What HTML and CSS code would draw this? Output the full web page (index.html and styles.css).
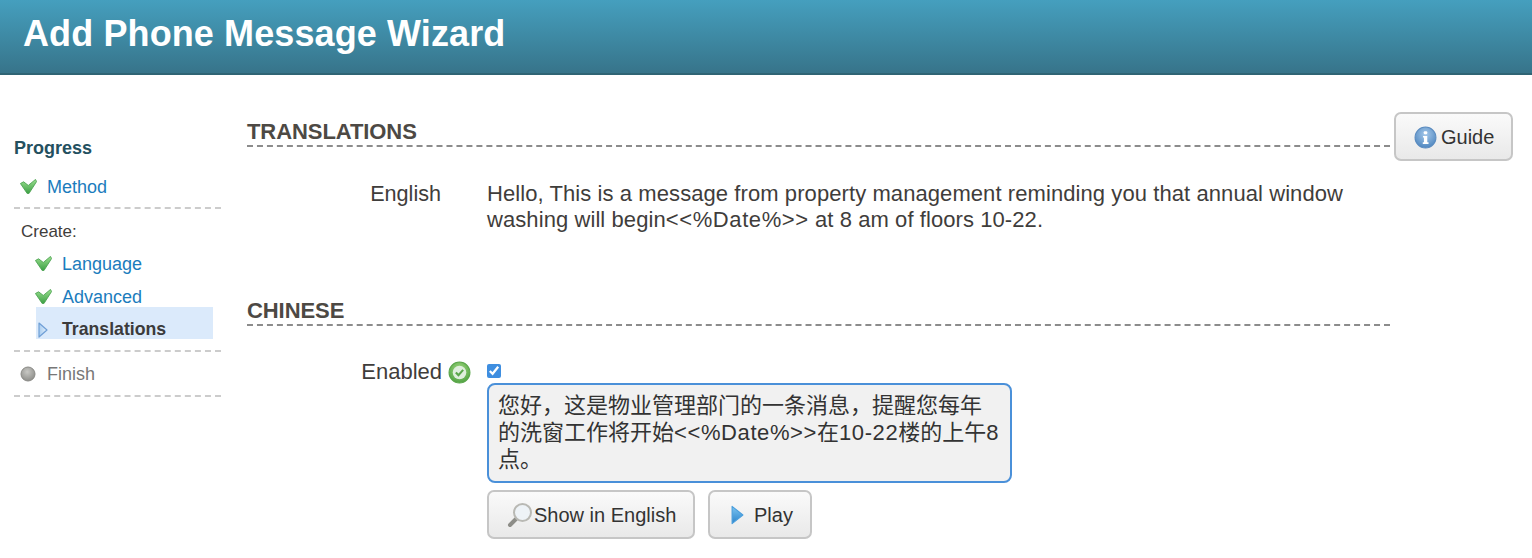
FILE: index.html
```html
<!DOCTYPE html>
<html lang="en">
<head>
<meta charset="utf-8">
<title>Add Phone Message Wizard</title>
<link rel="stylesheet" href="styles.css">
</head>
<body>
<svg class="defs" width="0" height="0" aria-hidden="true">
  <defs>
    <linearGradient id="gGreen" x1="0" y1="0" x2="0" y2="1"><stop offset="0" stop-color="#9be08f"/><stop offset="1" stop-color="#3c9f45"/></linearGradient>
    <linearGradient id="gBlue" x1="0" y1="0" x2="0" y2="1"><stop offset="0" stop-color="#7cc4f0"/><stop offset="1" stop-color="#2b84cc"/></linearGradient>
    <linearGradient id="gPale" x1="0" y1="0" x2="1" y2="0"><stop offset="0" stop-color="#a9cdf0"/><stop offset="1" stop-color="#e2effb"/></linearGradient>
    <radialGradient id="gGrey" cx=".45" cy=".35" r=".7"><stop offset="0" stop-color="#c8c8c4"/><stop offset="1" stop-color="#8a8a86"/></radialGradient>
    <radialGradient id="gInfo" cx=".5" cy=".35" r=".7"><stop offset="0" stop-color="#a5c8ea"/><stop offset="1" stop-color="#4a83bd"/></radialGradient>
    <radialGradient id="gOk" cx=".5" cy=".35" r=".7"><stop offset="0" stop-color="#9fd87f"/><stop offset="1" stop-color="#4c9f3f"/></radialGradient>
    <symbol id="check" viewBox="0 0 16 14" preserveAspectRatio="none"><path d="M.4 4.2 L3.4 2.6 L7.8 6 L14.6 .4 L15.6 2.4 L8.4 13.6 L6.8 13.6 Z" fill="url(#gGreen)" stroke="#46a04c" stroke-width=".8" stroke-linejoin="round"/></symbol>
  </defs>
</svg>

<header class="banner"><h1 class="banner-title">Add Phone Message Wizard</h1></header>

<div class="page">
  <nav class="progress">
    <h2 class="progress-title">Progress</h2>
    <div class="step step-top">
      <svg class="ico-check"><use href="#check"/></svg><a class="link">Method</a>
    </div>
    <div class="group">
      <div class="group-label">Create:</div>
      <div class="sub sub-first"><svg class="ico-check"><use href="#check"/></svg><a class="link">Language</a></div>
      <div class="sub sub-second"><svg class="ico-check"><use href="#check"/></svg><a class="link">Advanced</a></div>
      <div class="sub sub-current">
        <svg class="ico-tri" viewBox="0 0 10 16"><path d="M1 1 L9 8 L1 15 Z" fill="url(#gPale)" stroke="#6f9fd6" stroke-width="1.2" stroke-linejoin="round"/></svg>
        <strong class="current-text">Translations</strong>
      </div>
    </div>
    <div class="step step-finish">
      <svg class="ico-dot" viewBox="0 0 16 16"><circle cx="8" cy="8" r="7" fill="url(#gGrey)" stroke="#8a8a86"/></svg><span class="muted">Finish</span>
    </div>
  </nav>

  <main class="content">
    <div class="head-row">
      <h2 class="section-title">TRANSLATIONS</h2>
      <button class="btn btn-guide" type="button">
        <svg class="ico-info" viewBox="0 0 22 22"><circle cx="11" cy="11" r="10" fill="url(#gInfo)" stroke="#5b8cc0"/><rect x="9.3" y="5" width="3.4" height="3" rx="1" fill="#fff"/><path d="M8.6 9.5h4.1v6h1.2v1.6H8.4v-1.6h1.1v-4.4h-.9z" fill="#fff"/></svg>Guide
      </button>
    </div>
    <div class="field field-english">
      <div class="field-label">English</div>
      <div class="field-text">
        <div class="line">Hello, This is a message from property management reminding you that annual window</div>
        <div class="line">washing will begin<span class="token">&lt;&lt;%Date%&gt;&gt;</span> at 8 am of floors 10-22.</div>
      </div>
    </div>

    <h2 class="section-title section-chinese">CHINESE</h2>
    <div class="field field-chinese">
      <div class="field-label label-enabled">Enabled
        <svg class="ico-ok" viewBox="0 0 22 22"><circle cx="11" cy="11" r="10" fill="url(#gOk)" stroke="#5aa64a"/><circle cx="11" cy="11" r="6.5" fill="#dfeedd"/><path d="M7.5 11 L10 13.5 L14.5 8.5" fill="none" stroke="#5aa64a" stroke-width="2"/></svg>
      </div>
      <div class="field-body">
        <input class="enable-box" type="checkbox" checked>
        <div class="message" lang="zh-CN">
          <div class="line">您好，这是物业管理部门的一条消息，提醒您每年</div>
          <div class="line">的洗窗工作将开始<span class="latin">&lt;&lt;%Date%&gt;&gt;</span>在<span class="latin">10-22</span>楼的上午<span class="latin">8</span></div>
          <div class="line">点。</div>
        </div>
        <div class="actions">
          <button class="btn btn-show" type="button">
            <svg class="ico-search" viewBox="0 0 26 26"><path d="M9 17 L3 23" stroke="#8d8d88" stroke-width="4" stroke-linecap="round"/><circle cx="15.5" cy="10.5" r="8.5" fill="#eef3f7" stroke="#b9b9b4" stroke-width="2"/></svg>Show in English
          </button>
          <button class="btn btn-play" type="button">
            <svg class="ico-play" viewBox="0 0 12 18"><path d="M1 1 L11 9 L1 17 Z" fill="url(#gBlue)" stroke="#4b9fdd" stroke-linejoin="round"/></svg>Play
          </button>
        </div>
      </div>
    </div>
  </main>
</div>
</body>
</html>
```
FILE: styles.css
```css
* { box-sizing: border-box; }
html, body { margin: 0; height: 558px; overflow: hidden; background: #fff; }
body { font-family: "Liberation Sans", Arial, sans-serif; color: #3f3d3b; }
.defs { position: absolute; }

.banner {
  height: 75px;
  padding: 13px 0 0 23px;
  background: linear-gradient(#459fbe, #37748a);
  border-bottom: 2px solid #2f6474;
}
.banner-title { margin: 0; font-size: 36px; line-height: 41px; font-weight: 700; letter-spacing: .11px; color: #fff; }

.page { display: flex; align-items: flex-start; }

.progress { width: 207px; margin: 63px 0 0 14px; flex: none; font-size: 18px; }
.progress-title { margin: 0; font-size: 18px; line-height: 20px; font-weight: 700; color: #24505f; }
.link { color: #1b7cbd; }
.muted { color: #777; }

.step { display: flex; align-items: center; padding-left: 6px; }
.step-top { margin-top: 18px; height: 33px; padding-bottom: 9px; border-bottom: 2px dashed #ccc; }
.ico-check { width: 17px; height: 15px; flex: none; margin: -2px 10px 0 0; }

.group { padding: 13px 8px 11px 7px; border-bottom: 2px dashed #ccc; }
.group-label { font-size: 17px; line-height: 20px; }
.sub { display: flex; align-items: center; margin-left: 15px; }
.sub .ico-check { margin-left: -1px; }
.sub-first { margin-top: 5px; height: 33px; padding-top: 2px; }
.sub-second { height: 27px; padding-top: 7px; }
.sub-current { height: 32px; padding-top: 12px; background: #dbeafb; }
.sub-current .current-text { color: #3b3b3b; font-size: 17.7px; }
.ico-tri { width: 10px; height: 16px; flex: none; margin: 1px 14px 0 2px; }

.step-finish { height: 45px; padding-top: 1px; border-bottom: 2px dashed #ccc; }
.ico-dot { width: 16px; height: 16px; flex: none; margin-right: 11px; }

.content { width: 1266px; margin-left: 26px; flex: none; }
.head-row { display: flex; align-items: flex-start; margin-top: 37px; }
.section-title {
  margin: 0;
  width: 1143px;
  height: 35px;
  padding-top: 8px;
  border-bottom: 2px dashed #8c8c8c;
  font-size: 22px;
  line-height: 24px;
  font-weight: 700;
  letter-spacing: -.08px;
  color: #4d4944;
  flex: none;
}
.btn {
  display: inline-flex;
  align-items: center;
  font-family: "Liberation Sans", Arial, sans-serif;
  font-size: 20px;
  color: #333;
  height: 49px;
  padding: 1px 0 0;
  border: 2px solid #c6c6c6;
  border-radius: 7px;
  background: linear-gradient(#fafafa, #e9e9e9);
}
.btn-guide { width: 119px; margin-left: 4px; padding-left: 18px; }
.ico-info { width: 23px; height: 23px; margin-right: 4px; flex: none; }

.field { display: flex; }
.field-label { width: 194px; text-align: right; font-size: 21.6px; flex: none; }
.field-text { margin: 0 0 0 46px; width: 870px; font-size: 22px; line-height: 26px; letter-spacing: .08px; color: #3f3d3b; }
.token { letter-spacing: .6px; }
.field-english { margin-top: 20px; line-height: 26px; }

.section-chinese { margin-top: 58px; }
.field-chinese { margin-top: 33px; }
.label-enabled { display: flex; justify-content: flex-end; align-items: center; gap: 6px; height: 26px; width: 224px; font-size: 22px; }
.ico-ok { width: 23px; height: 23px; flex: none; }
.field-body { margin-left: 16px; width: 525px; }
.enable-box { display: block; width: 14px; height: 14px; margin: 5px 0; accent-color: #3e8ee0; }
.message {
  width: 525px;
  height: 100px;
  padding: 7px 9px;
  border: 2px solid #4a90d9;
  border-radius: 8px;
  background: #f1f1f1;
  font-family: "Liberation Sans", "Noto Sans CJK SC", sans-serif;
  font-size: 22px;
  line-height: 27px;
  color: #333;
}
.line { white-space: nowrap; }
.latin { letter-spacing: .6px; }
.actions { display: flex; gap: 13px; margin-top: 7px; }
.btn-show { width: 208px; padding-left: 18px; }
.ico-search { width: 26px; height: 26px; margin-right: 1px; flex: none; }
.btn-play { width: 104px; padding-left: 21px; }
.ico-play { width: 13px; height: 22px; margin-right: 10px; flex: none; }
```
